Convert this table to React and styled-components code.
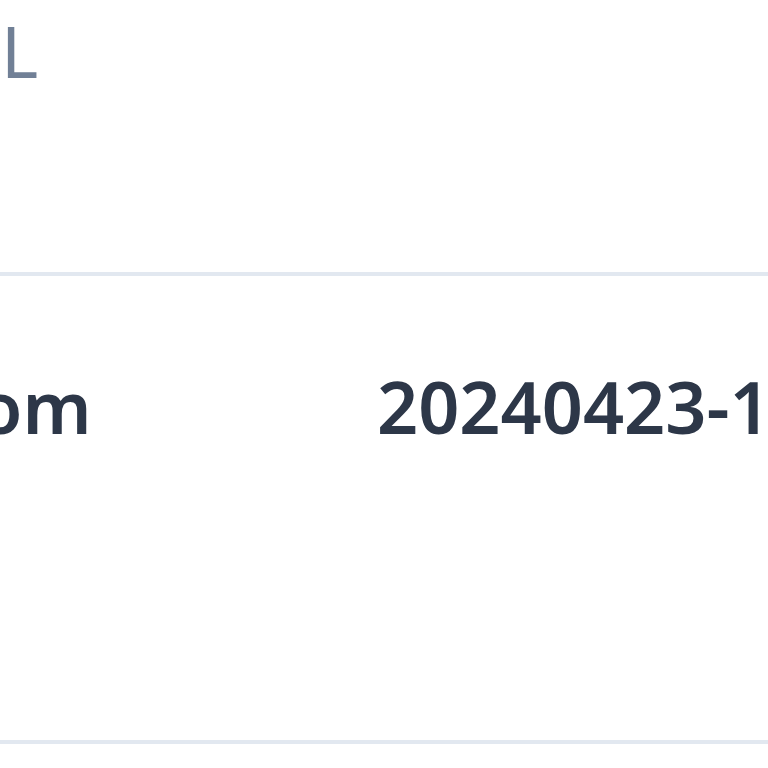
import styled, { createGlobalStyle } from 'styled-components'

const GlobalStyle = createGlobalStyle`
  html, body {
    margin: 0;
    padding: 0;
    background: #ffffff;
  }
  body {
    font-family: "Noto Sans", "Open Sans", sans-serif;
    overflow: hidden;
  }
`

const Table = styled.div`
  width: 768px;
  height: 768px;
  overflow: hidden;
  display: flex;
  flex-direction: column;
`

const HeaderRow = styled.div`
  display: grid;
  grid-template-columns: 377px 1fr;
  height: 272px;
  border-bottom: 4px solid #e2e8f0;
`

const HeadCell = styled.div`
  padding-top: 15px;
  padding-left: ${(p) => p.$indent || 0}px;
  font-size: 71px;
  line-height: 72px;
  font-weight: 400;
  color: #718096;
  white-space: nowrap;
`

const Row = styled.div`
  display: grid;
  grid-template-columns: 377px 1fr;
  height: 464px;
  border-bottom: 4px solid #e2e8f0;
`

const Cell = styled.div`
  padding-top: 94px;
  text-indent: ${(p) => p.$shift || 0}px;
  font-size: 72px;
  line-height: 72px;
  font-weight: 600;
  color: #2d3748;
  white-space: nowrap;
  overflow: hidden;
`

export default function App() {
  return (
    <>
      <GlobalStyle />
      <Table>
        <HeaderRow>
          <HeadCell $indent={1}>L</HeadCell>
          <HeadCell />
        </HeaderRow>
        <Row>
          <Cell $shift={-22}>om</Cell>
          <Cell>20240423-1</Cell>
        </Row>
      </Table>
    </>
  )
}
